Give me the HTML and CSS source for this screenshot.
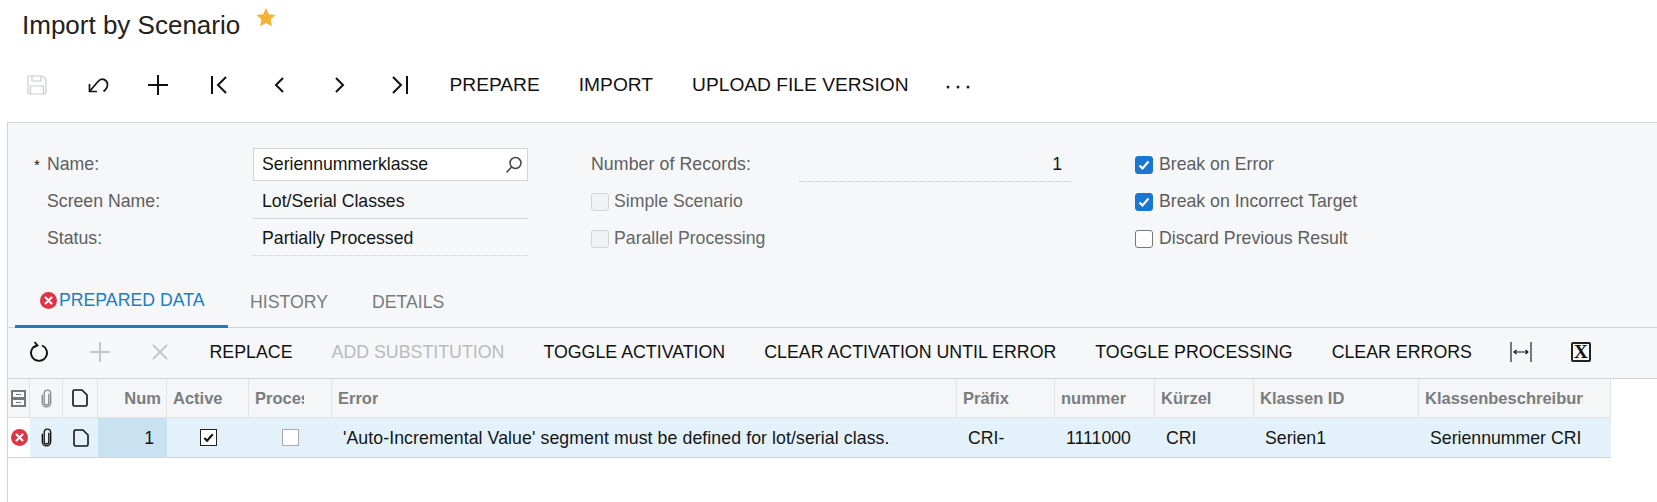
FILE: index.html
```html
<!DOCTYPE html>
<html lang="en">
<head>
    <meta charset="UTF-8">
    <title>Import by Scenario</title>
    <link rel="stylesheet" href="styles.css">
</head>
<body>
    <svg class="icon-defs" width="0" height="0">
        <symbol id="i-clip" viewBox="0 0 14 20"><path d="M9.5 5v9.5a2.5 2.5 0 0 1-5 0V4.5a3.5 3.5 0 0 1 7 0v10a4.5 4.5 0 0 1-9 0V6" fill="none" stroke="currentColor" stroke-width="1.5"/></symbol>
        <symbol id="i-doc" viewBox="0 0 16 18"><path d="M2.500 1H10l5 5v9.500a1.500 1.500 0 0 1-1.500 1.500h-11A1.500 1.500 0 0 1 1 15.500v-13A1.500 1.500 0 0 1 2.500 1z" fill="none" stroke="currentColor" stroke-width="1.6" stroke-linejoin="round"/></symbol>
        <symbol id="i-err" viewBox="0 0 16 16"><circle cx="8" cy="8" r="8" fill="#dc3545"/><path d="M5.2 5.2l5.6 5.6M10.8 5.2l-5.6 5.6" stroke="#fff" stroke-width="2" stroke-linecap="round"/></symbol>
        <symbol id="i-check" viewBox="0 0 16 16"><path d="M3.5 8.5l3 3 6-7" fill="none" stroke="currentColor" stroke-width="2.2"/></symbol>
    </svg>

    <h1 class="page-title">Import by Scenario
        <svg class="star" viewBox="0 0 20 20"><path d="M10 0l3 6.6 7 .8-5.200 4.800 1.400 7L10 15.700 3.800 19.200l1.400-7L0 7.400l7-.8z" fill="#f5b335"/></svg>
    </h1>

    <div class="toolbar main-bar">
        <button class="tool-icon"><svg width="20" height="20" viewBox="0 0 20 20" fill="none" stroke="#c9cbcd" stroke-width="1.200"><path d="M1.500 1h14l3.500 3.500v13a1.500 1.500 0 0 1-1.500 1.500h-15a1.500 1.500 0 0 1-1.500-1.500v-15a1.500 1.500 0 0 1 .5-1.500z"/><path d="M5 1v5h9V1M3.500 19v-8h13v8"/></svg></button>
        <button class="tool-icon"><svg width="22" height="18" viewBox="0 0 22 18" fill="none" stroke="#111" stroke-width="1.700"><path d="M2.500 8v7.500H10"/><path d="M2.500 15.500L11 5.500C15 1 20.500 4 20.500 8.500c0 3-1.500 5-4 7"/></svg></button>
        <button class="tool-icon"><svg width="22" height="22" viewBox="0 0 22 22" stroke="#111" stroke-width="2"><path d="M11 1v20M1 11h20"/></svg></button>
        <button class="tool-icon"><svg width="18" height="20" viewBox="0 0 18 20" fill="none" stroke="#111" stroke-width="2"><path d="M2 1v18M16 2l-8 8 8 8"/></svg></button>
        <button class="tool-icon"><svg width="12" height="18" viewBox="0 0 12 18" fill="none" stroke="#111" stroke-width="2"><path d="M10 2L3 9l7 7"/></svg></button>
        <button class="tool-icon"><svg width="12" height="18" viewBox="0 0 12 18" fill="none" stroke="#111" stroke-width="2"><path d="M2 2l7 7-7 7"/></svg></button>
        <button class="tool-icon"><svg width="18" height="20" viewBox="0 0 18 20" fill="none" stroke="#111" stroke-width="2"><path d="M16 1v18M2 2l8 8-8 8"/></svg></button>
        <button class="tool-text first">PREPARE</button>
        <button class="tool-text">IMPORT</button>
        <button class="tool-text">UPLOAD FILE VERSION</button>
        <button class="tool-plain dots"><svg width="24" height="4" viewBox="0 0 24 4" fill="#222"><circle cx="2" cy="2" r="1.500"/><circle cx="12" cy="2" r="1.500"/><circle cx="22" cy="2" r="1.500"/></svg></button>
    </div>

    <main class="screen">
        <section class="form">
            <div class="form-col col-fields">
                <div class="form-row">
                    <span class="required">*</span><label>Name:</label>
                    <div class="selector">Seriennummerklasse
                        <svg width="18" height="18" viewBox="0 0 18 18" fill="none" stroke="#444" stroke-width="1.500"><circle cx="10.500" cy="7" r="5.500"/><path d="M6.500 11L1.500 16.500"/></svg>
                    </div>
                </div>
                <div class="form-row">
                    <label>Screen Name:</label>
                    <div class="value solid">Lot/Serial Classes</div>
                </div>
                <div class="form-row">
                    <label>Status:</label>
                    <div class="value dotted">Partially Processed</div>
                </div>
            </div>

            <div class="form-col col-options">
                <div class="form-row">
                    <label class="records-label">Number of Records:</label>
                    <div class="value dotted number">1</div>
                </div>
                <div class="form-row"><span class="check disabled"></span><span class="check-label">Simple Scenario</span></div>
                <div class="form-row"><span class="check disabled"></span><span class="check-label">Parallel Processing</span></div>
            </div>

            <div class="form-col col-flags">
                <div class="form-row"><span class="check on"><svg><use href="#i-check"/></svg></span><span class="check-label">Break on Error</span></div>
                <div class="form-row"><span class="check on"><svg><use href="#i-check"/></svg></span><span class="check-label">Break on Incorrect Target</span></div>
                <div class="form-row"><span class="check"></span><span class="check-label">Discard Previous Result</span></div>
            </div>
        </section>

        <nav class="tabs">
            <div class="tab active"><svg width="17" height="17"><use href="#i-err"/></svg>PREPARED DATA</div>
            <div class="tab">HISTORY</div>
            <div class="tab">DETAILS</div>
        </nav>

        <div class="toolbar grid-bar">
            <button class="tool-icon"><svg width="20" height="22" viewBox="0 0 20 22" fill="none" stroke="#111" stroke-width="1.800"><path d="M7 4.500a8 8 0 1 0 6 0"/><path d="M5.500 1l3 3.500-4 2"/></svg></button>
            <button class="tool-icon"><svg width="22" height="22" viewBox="0 0 22 22" stroke="#c4c6c8" stroke-width="2"><path d="M11 1v20M1 11h20"/></svg></button>
            <button class="tool-icon"><svg width="18" height="18" viewBox="0 0 18 18" stroke="#c4c6c8" stroke-width="2"><path d="M2 2l14 14M16 2L2 16"/></svg></button>
            <button class="tool-text first">REPLACE</button>
            <button class="tool-text off">ADD SUBSTITUTION</button>
            <button class="tool-text">TOGGLE ACTIVATION</button>
            <button class="tool-text">CLEAR ACTIVATION UNTIL ERROR</button>
            <button class="tool-text">TOGGLE PROCESSING</button>
            <button class="tool-text">CLEAR ERRORS</button>
            <button class="tool-plain fit"><svg width="22" height="20" viewBox="0 0 22 20" fill="none" stroke="#111" stroke-width="1.100"><path d="M1 0v20M21 0v20M4 10h14M6.500 8L4 10l2.500 2M15.500 8L18 10l-2.500 2"/></svg></button>
            <button class="tool-plain excel">X</button>
        </div>

        <div class="grid">
            <div class="grid-row grid-head">
                <div class="cell icon-cell"><svg width="15" height="17" viewBox="0 0 15 17"><path d="M0 0h15v17H0z" fill="#777"/><path d="M2 2h11v5H2zM2 10h11v5H2z" fill="#f5f7f9"/><path d="M5 4h5v1H5zM5 12h5v1H5z" fill="#777"/></svg></div>
                <div class="cell icon-cell grey"><svg width="13" height="19"><use href="#i-clip"/></svg></div>
                <div class="cell icon-cell dark"><svg width="16" height="18"><use href="#i-doc"/></svg></div>
                <div class="cell right">Num</div>
                <div class="cell wide"><span class="clip">Active</span></div>
                <div class="cell"><span class="clip">Process</span></div>
                <div class="cell"><span class="clip">Error</span></div>
                <div class="cell"><span class="clip">Präfix</span></div>
                <div class="cell"><span class="clip">nummer</span></div>
                <div class="cell"><span class="clip">Kürzel</span></div>
                <div class="cell"><span class="clip">Klassen ID</span></div>
                <div class="cell"><span class="clip">Klassenbeschreibung</span></div>
            </div>
            <div class="grid-row grid-data">
                <div class="cell icon-cell error-cell"><svg width="17" height="17"><use href="#i-err"/></svg></div>
                <div class="cell icon-cell"><svg width="13" height="19"><use href="#i-clip"/></svg></div>
                <div class="cell icon-cell"><svg width="16" height="18"><use href="#i-doc"/></svg></div>
                <div class="cell right current">1</div>
                <div class="cell center"><span class="grid-check"><svg><use href="#i-check"/></svg></span></div>
                <div class="cell center"><span class="grid-check empty"></span></div>
                <div class="cell error-text">'Auto-Incremental Value' segment must be defined for lot/serial class.</div>
                <div class="cell">CRI-</div>
                <div class="cell">1111000</div>
                <div class="cell">CRI</div>
                <div class="cell">Serien1</div>
                <div class="cell">Seriennummer CRI</div>
            </div>
        </div>
    </main>
</body>
</html>
```

FILE: styles.css
```css
* { box-sizing: border-box; }
html, body { height: 100%; }
body {
    margin: 0;
    font-family: "Liberation Sans", Arial, sans-serif;
    font-size: 17.7px;
    color: #151515;
    background: #fff;
    overflow: hidden;
}
.icon-defs { position: absolute; }

.page-title {
    display: flex;
    align-items: flex-start;
    height: 50px;
    margin: 0;
    padding: 10px 0 0 22px;
    font-size: 26px;
    line-height: 30px;
    font-weight: normal;
    color: #222;
}
.star { width: 20px; height: 19px; margin: -2px 0 0 16px; }

.toolbar { display: flex; align-items: center; }
button {
    padding: 0;
    border: none;
    background: none;
    font: inherit;
    color: #111;
}
.main-bar { height: 70px; margin-bottom: 2px; padding-left: 7px; }
.tool-icon {
    display: flex;
    align-items: center;
    justify-content: center;
    width: 60.500px;
    height: 30px;
}
.tool-text { margin-left: 39px; font-size: 19.200px; white-space: nowrap; }
.tool-text.first { margin-left: 19px; }
.tool-text.off { color: #b9bbbd; }
.tool-plain { display: flex; }
.dots { margin: 3px 0 0 37px; }

.screen {
    min-height: calc(100% - 122px);
    margin-left: 7px;
    border-top: 1px solid #d2d4d6;
    border-left: 1px solid #d2d4d6;
}

.form {
    display: flex;
    height: 155px;
    padding-top: 23px;
    background: #f5f7f9;
}
.form-row { display: flex; align-items: center; height: 37px; position: relative; }
.form-row label { color: #5e5e5e; }
.col-fields { width: 520px; padding-left: 39px; }
.col-fields label { width: 206px; }
.required { position: absolute; left: -13px; top: 10px; font-size: 15px; }
.selector {
    display: flex;
    align-items: center;
    justify-content: space-between;
    width: 275px;
    height: 33px;
    padding: 0 4px 0 8px;
    background: #fff;
    border: 1px solid #d2d4d6;
}
.value { width: 275px; height: 35px; padding: 0 9px; line-height: 35px; }
.solid { border-bottom: 1px solid #d2d4d6; }
.dotted { border-bottom: 1px dotted #c4c6c8; }

.col-options { width: 607px; padding-left: 63px; }
.records-label { width: 208px; white-space: nowrap; letter-spacing: .1px; }
.number { width: 272px; text-align: right; padding-right: 9px; }
.col-flags { flex: 1; }
.col-flags .check { margin-right: 6px; }

.check {
    display: block;
    width: 18px;
    height: 18px;
    margin-right: 5px;
    flex: none;
    color: #fff;
    background: #fff;
    border: 1px solid #777;
    border-radius: 3px;
}
.check svg { display: block; width: 16px; height: 16px; }
.check.on { background: #1976d2; border-color: #1976d2; }
.check.disabled { background: #f1f2f3; border-color: #d2d4d6; }
.check-label { color: #5e5e5e; }
.check.disabled + .check-label { color: #666; }

.tabs {
    display: flex;
    height: 50px;
    padding-left: 7px;
    background: #f5f7f9;
    border-bottom: 1px solid #d2d4d6;
}
.tab {
    display: flex;
    align-items: center;
    gap: 2px;
    height: 50px;
    padding: 0 22px 2px;
    color: #797b7e;
}
.tab.active {
    width: 213px;
    padding: 0 0 2px 25px;
    color: #1b7dc4;
    border-bottom: 3px solid #1b7dc4;
}

.grid-bar {
    height: 51px;
    padding: 0 0 2px 1px;
    background: #f5f7f9;
    border-bottom: 1px solid #d2d4d6;
}
.grid-bar .tool-text { font-size: 17.800px; }
.grid-bar .tool-text.first { margin-left: 19px; }
.grid-bar .tool-plain.fit { margin-left: 38px; }
.excel {
    align-items: center;
    justify-content: center;
    width: 20px;
    height: 20px;
    margin-left: 39px;
    border: 2px solid #222;
    border-radius: 2px;
    font-family: "Liberation Serif", serif;
    font-size: 19px;
    font-weight: bold;
    line-height: 16px;
}

.grid-row {
    display: grid;
    grid-template-columns: 22px 33px 35px 69px 82px 83px 625px 98px 100px 99px 165px 192px;
    width: 1603px;
}
.grid-head {
    height: 39px;
    background: #f5f6f7;
    border-bottom: 1px solid #dfe1e3;
    font-weight: bold;
    font-size: 16.500px;
    color: #7a7c7f;
}
.grid-data {
    height: 40px;
    background: #e3f1fa;
    border-bottom: 1px solid #d2d4d6;
}
.cell {
    display: flex;
    align-items: center;
    overflow: hidden;
    white-space: nowrap;
}
.clip { min-width: 0; overflow: hidden; }
.grid-head .cell {
    padding: 0 27px 0 6px;
    border-right: 1px solid #e2e4e6;
}
.grid-head .cell.wide { padding-right: 6px; }
.grid-data .cell { padding: 2px 6px 0 11px; }
.grid-head .cell.right { justify-content: flex-end; padding: 0 5px 0 0; }
.grid-data .cell.right { justify-content: flex-end; padding: 2px 13px 0 0; }
.grid-head .cell.icon-cell, .grid-data .cell.icon-cell,
.grid-data .cell.center { justify-content: center; padding: 0; }
.grey { color: #8a8c8e; }
.dark { color: #111; }
.error-cell { background: #fff; }
.error-text { letter-spacing: .09px; }
.current { background: #c9e2f2; }

.grid-check {
    display: block;
    width: 17px;
    height: 17px;
    background: #fff;
    border: 1px solid #222;
    color: #111;
}
.grid-check svg { display: block; width: 15px; height: 15px; }
.grid-check.empty { border-color: #a8aaac; }
```
